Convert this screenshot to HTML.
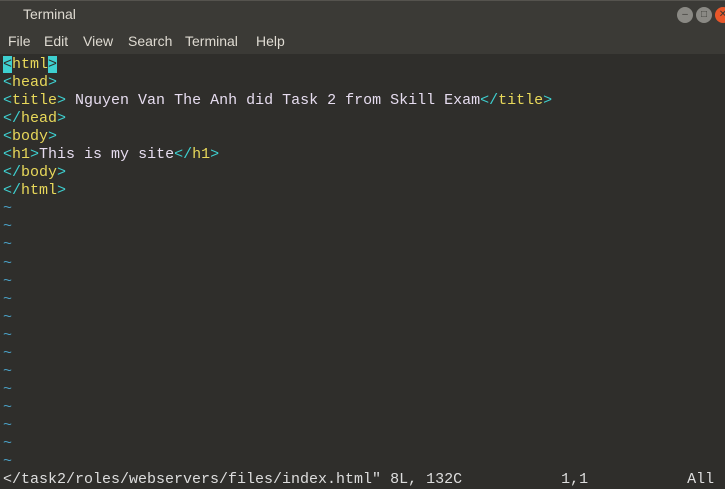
<!DOCTYPE html>
<html><head><style>
body{margin:0;width:725px;height:489px;overflow:hidden;background:#2f2e2b;font-family:"Liberation Sans",sans-serif}
.tb{position:absolute;left:0;top:0;width:725px;height:28px;background:#3b3a36;border-top:1px solid #55534e;box-sizing:border-box}
.tb span{position:absolute;left:23px;top:5px;color:#dfdbd2;font-size:14px}
.mb{position:absolute;left:0;top:28px;width:725px;height:26px;background:#3b3a36;color:#dfdbd2;font-size:14px}
.mb span{position:absolute;top:5px}
.btn{position:absolute;top:6px;width:16px;height:16px;border-radius:50%;background:#8a8984;color:#3b3a36;font-size:10px;text-align:center;line-height:16px}
.term{position:absolute;left:3px;top:56px;font-family:"Liberation Mono",monospace;font-size:15px;line-height:18.05px;color:#e6dcef;white-space:pre}
.c{color:#3ed0d0}.y{color:#e8d85a}.t{color:#4a9fc4}.cur{background:#3ed0d0;color:#2f2e2b}
.sl{color:#ddd}
</style></head><body>
<div class="tb"><span>Terminal</span>
<div class="btn" style="left:677px">&#8211;</div>
<div class="btn" style="left:696px">&#9633;</div>
<div class="btn" style="left:715px;background:#e9572a;color:#3b3a36">&#10005;</div></div>
<div class="mb"><span style="left:8px">File</span><span style="left:44px">Edit</span><span style="left:83px">View</span><span style="left:128px">Search</span><span style="left:185px">Terminal</span><span style="left:256px">Help</span></div>
<div class="term"><span class="cur">&lt;</span><span class="y">html</span><span class="cur">&gt;</span>
<span class="c">&lt;</span><span class="y">head</span><span class="c">&gt;</span>
<span class="c">&lt;</span><span class="y">title</span><span class="c">&gt;</span> Nguyen Van The Anh did Task 2 from Skill Exam<span class="c">&lt;/</span><span class="y">title</span><span class="c">&gt;</span>
<span class="c">&lt;/</span><span class="y">head</span><span class="c">&gt;</span>
<span class="c">&lt;</span><span class="y">body</span><span class="c">&gt;</span>
<span class="c">&lt;</span><span class="y">h1</span><span class="c">&gt;</span>This is my site<span class="c">&lt;/</span><span class="y">h1</span><span class="c">&gt;</span>
<span class="c">&lt;/</span><span class="y">body</span><span class="c">&gt;</span>
<span class="c">&lt;/</span><span class="y">html</span><span class="c">&gt;</span>
<span class="t">~
~
~
~
~
~
~
~
~
~
~
~
~
~
~</span>
<span class="sl">&lt;/task2/roles/webservers/files/index.html" 8L, 132C           1,1           All</span></div>
</body></html>
